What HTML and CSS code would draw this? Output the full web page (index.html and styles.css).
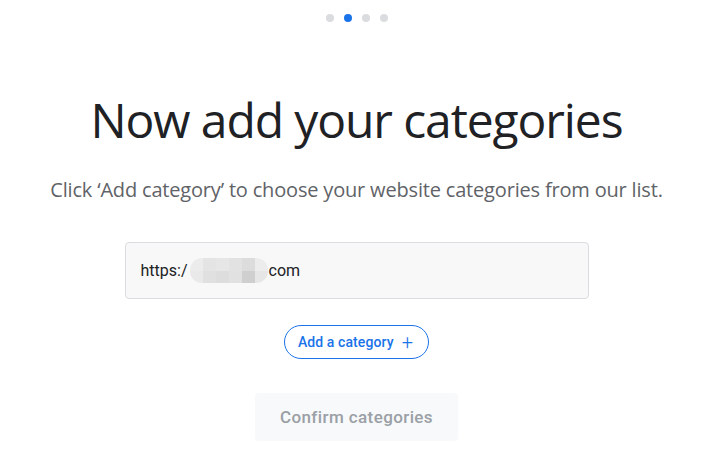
FILE: index.html
```html
<!DOCTYPE html>
<html lang="en">
<head>
<meta charset="utf-8">
<link rel="stylesheet" href="styles.css">
</head>
<body>
<main class="page">
  <div class="dots">
    <span class="dot"></span>
    <span class="dot active"></span>
    <span class="dot"></span>
    <span class="dot"></span>
  </div>
  <h1 class="title">Now add your categories</h1>
  <p class="subtitle">Click ‘Add category’ to choose your website categories from our list.</p>
  <div class="url-field">
    <span class="url-text">https:/</span><span class="blur"><i></i><i></i><i></i><i></i><i></i><i></i><i></i><i></i><i></i><i></i><i></i><i></i></span><span class="url-text">com</span>
  </div>
  <button class="add-btn" type="button">Add a category <span class="plus">+</span></button>
  <button class="confirm-btn" type="button" disabled>Confirm categories</button>
</main>
</body>
</html>
```

FILE: styles.css
```css
html, body {
  margin: 0;
  padding: 0;
  background: #ffffff;
}
.page {
  width: 713px;
  height: 463px;
  display: flex;
  flex-direction: column;
  align-items: center;
  font-family: "Open Sans", Roboto, sans-serif;
}
.dots {
  display: flex;
  gap: 10px;
  margin-top: 14px;
}
.dot {
  width: 8px;
  height: 8px;
  border-radius: 50%;
  background: #dadce0;
}
.dot.active {
  background: #1a73e8;
}
.title {
  margin: 70px 0 0;
  font-weight: 400;
  font-size: 48px;
  line-height: 56px;
  color: #202124;
  letter-spacing: -1.1px;
}
.subtitle {
  margin: 28px 0 0;
  font-size: 20px;
  line-height: 28px;
  color: #5f6368;
  letter-spacing: -0.18px;
}
.url-field {
  box-sizing: border-box;
  width: 464px;
  height: 57px;
  margin-top: 38px;
  border: 1px solid #dadce0;
  border-radius: 4px;
  background: #f8f8f8;
  display: flex;
  align-items: center;
  padding-left: 15px;
  font-family: Roboto, "Open Sans", sans-serif;
  font-size: 16px;
  color: #202124;
}
.blur {
  display: grid;
  grid-template-columns: repeat(6, 1fr);
  grid-template-rows: repeat(2, 1fr);
  width: 78px;
  height: 25px;
  margin: 0 1px 0 2px;
  border-radius: 12px;
  overflow: hidden;
  filter: blur(0.6px);
}
.blur i:nth-child(1) { background: #ececec; }
.blur i:nth-child(2) { background: #e4e4e4; }
.blur i:nth-child(3) { background: #e6e6e6; }
.blur i:nth-child(4) { background: #e2e2e2; }
.blur i:nth-child(5) { background: #dcdcdc; }
.blur i:nth-child(6) { background: #ececec; }
.blur i:nth-child(7) { background: #e9e9e9; }
.blur i:nth-child(8) { background: #e0e0e0; }
.blur i:nth-child(9) { background: #dddddd; }
.blur i:nth-child(10) { background: #e1e1e1; }
.blur i:nth-child(11) { background: #cfcfcf; }
.blur i:nth-child(12) { background: #e6e6e6; }
.add-btn {
  margin-top: 26px;
  height: 34px;
  padding: 0 15px 0 13px;
  border: 1px solid #1a73e8;
  border-radius: 17px;
  background: #fff;
  color: #1a73e8;
  font-family: Roboto, sans-serif;
  font-size: 14px;
  font-weight: 500;
  letter-spacing: 0.1px;
  display: flex;
  align-items: center;
}
.plus {
  margin-left: 8px;
  font-weight: 300;
  font-size: 20px;
  line-height: 1;
}
.confirm-btn {
  margin-top: 34px;
  width: 203px;
  height: 48px;
  border: none;
  border-radius: 4px;
  background: #f8f9fa;
  color: #9aa0a6;
  font-family: Roboto, sans-serif;
  font-size: 17px;
  font-weight: 500;
  letter-spacing: 0.4px;
}
```
